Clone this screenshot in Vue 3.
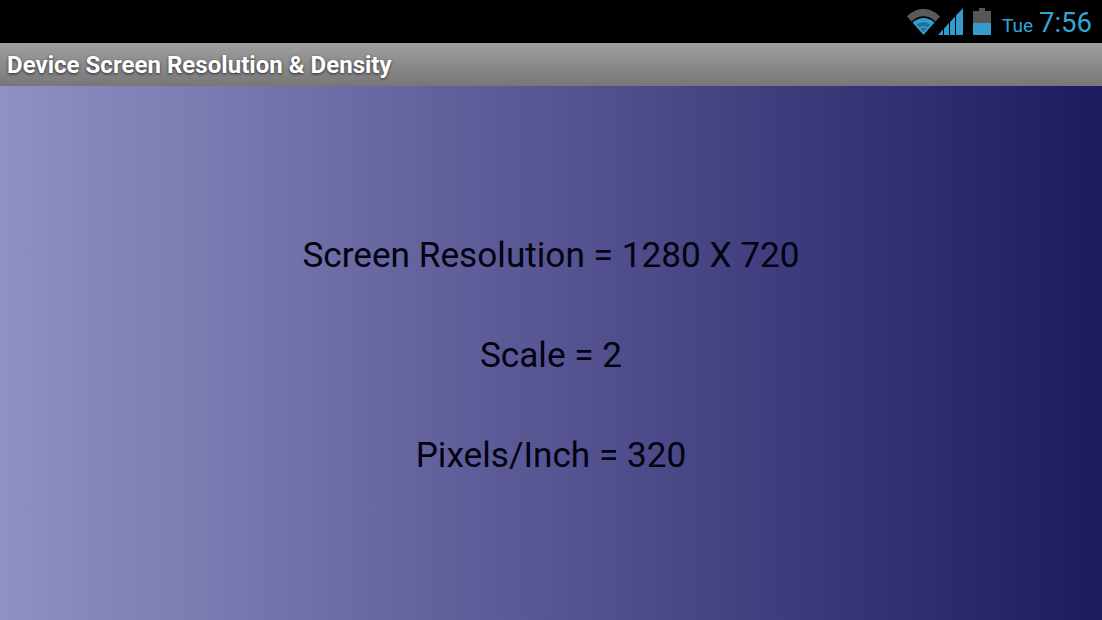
<template>
  <div class="screen">
    <div class="status-bar">
      <svg class="wifi" width="33" height="26" viewBox="0 0 33 26">
        <path d="M0 7.5C9 -2.5 24 -2.5 33 7.5L28.5 12.5C21 5.5 12 5.5 4.5 12.5Z" fill="#5a5a5a" />
        <path d="M5.5 13.5C12 7.5 21 7.5 27.5 13.5L16.5 26Z" fill="#339cca" />
        <path d="M10 15.5C14 12.5 19 12.5 23 15.5L20.5 18.4C18 16.6 15 16.6 12.5 18.4Z" fill="#1f6f92" />
        <path d="M13.5 19.6C15.5 18.6 17.5 18.6 19.5 19.6L16.5 23Z" fill="#1f6f92" />
      </svg>
      <svg class="signal" width="25" height="27" viewBox="0 0 25 27">
        <path d="M0 27L5 21.6V27Z" fill="#339cca" />
        <path d="M6 20.5L11 15V27H6Z" fill="#339cca" />
        <path d="M12 14L17 8.6V27H12Z" fill="#339cca" />
        <path d="M18 7.5L25 0V27H18Z" fill="#339cca" />
      </svg>
      <svg class="battery" width="18" height="27" viewBox="0 0 18 27">
        <path d="M6 0H12V3H18V15H0V3H6Z" fill="#565656" />
        <rect x="0" y="15" width="18" height="12" fill="#339cca" />
      </svg>
      <span class="day">Tue</span>
      <span class="clock">7:56</span>
    </div>
    <div class="title-bar">
      <span class="title">{{ title }}</span>
    </div>
    <main class="content">
      <p v-for="line in lines" :key="line" class="line">{{ line }}</p>
    </main>
  </div>
</template>

<script setup>
const title = "Device Screen Resolution & Density";
const lines = ["Screen Resolution = 1280 X 720", "Scale = 2", "Pixels/Inch = 320"];
</script>

<style>
html,
body {
  margin: 0;
  background: #000;
}
</style>

<style scoped>
.screen {
  width: 1102px;
  height: 620px;
  display: flex;
  flex-direction: column;
  overflow: hidden;
  font-family: Roboto, "Liberation Sans", sans-serif;
}

.status-bar {
  height: 43px;
  flex: none;
  box-sizing: border-box;
  padding: 8px 10px 0 0;
  display: flex;
  justify-content: flex-end;
  align-items: flex-start;
  background: #000;
  color: #36a5d6;
}

.wifi {
  margin-top: 1px;
}

.signal {
  margin-left: -2px;
}

.battery {
  margin-left: 10px;
}

.day {
  margin-left: 11px;
  margin-top: 7px;
  font-size: 19px;
  line-height: 22px;
}

.clock {
  margin-left: 6px;
  font-size: 27.5px;
  line-height: 30px;
}

.title-bar {
  height: 43px;
  flex: none;
  box-sizing: border-box;
  padding-left: 7px;
  display: flex;
  align-items: center;
  background: linear-gradient(#9f9f9f, #777);
}

.title {
  color: #fff;
  font-size: 24px;
  font-weight: 700;
  letter-spacing: 0.03px;
  text-shadow: 0 1px 3px rgba(0, 0, 0, 0.7);
}

.content {
  flex: 1;
  display: flex;
  flex-direction: column;
  align-items: center;
  justify-content: center;
  gap: 64px;
  padding-top: 3px;
  background: linear-gradient(to right, #9190c4, #1d1a60);
}

.line {
  margin: 0;
  color: #020210;
  font-size: 35.2px;
  line-height: 36px;
}
</style>
